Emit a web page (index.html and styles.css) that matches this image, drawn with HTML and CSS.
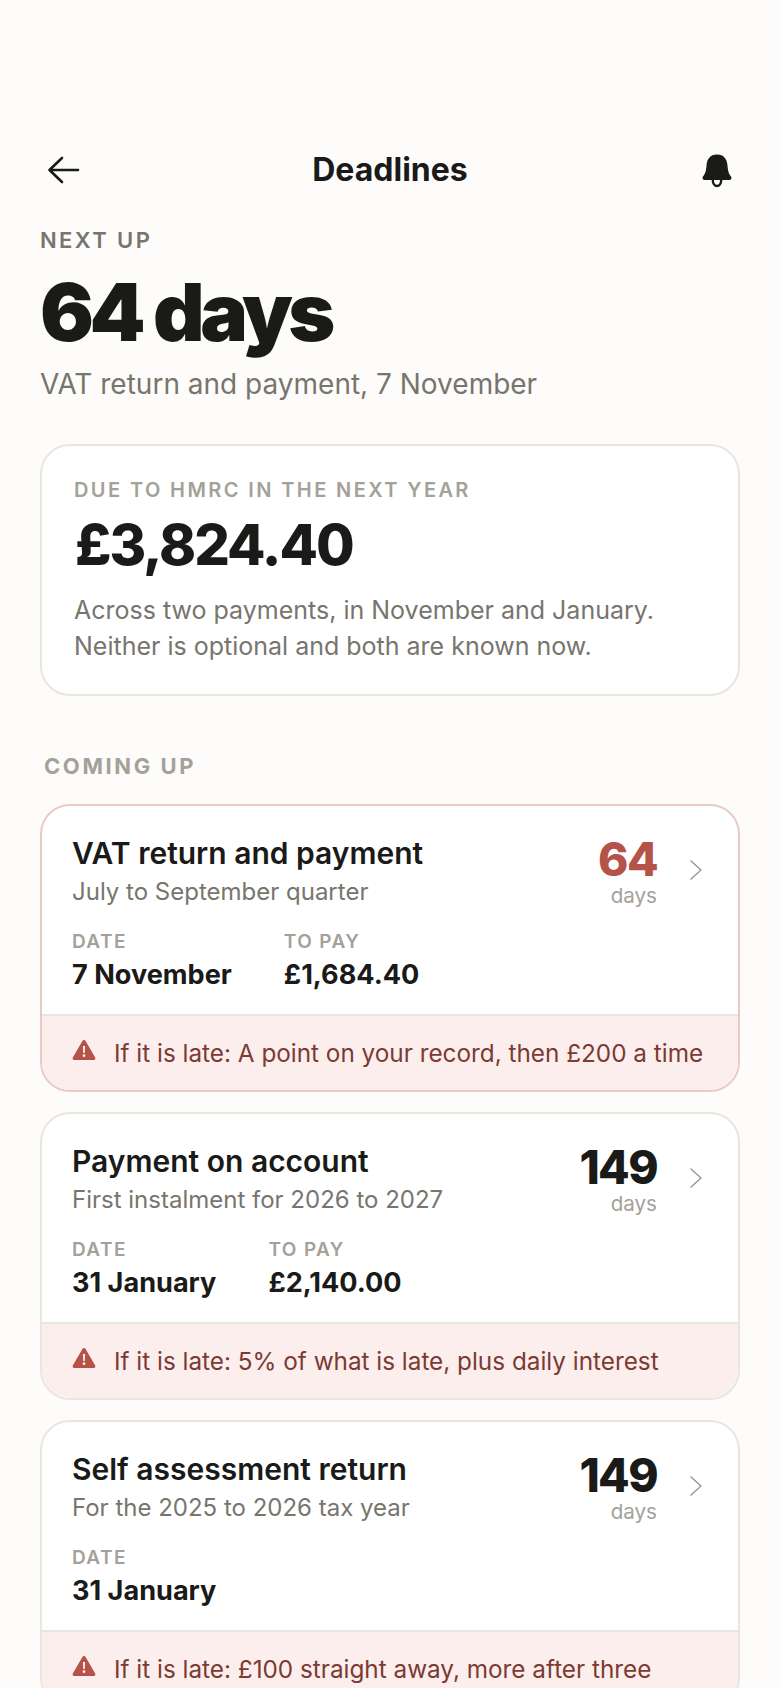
FILE: index.html
```html
<!DOCTYPE html>
<html lang="en">
<head>
<meta charset="utf-8">
<title>Deadlines</title>
<link rel="stylesheet" href="styles.css">
</head>
<body>
<div class="screen">
  <header class="nav">
    <svg class="nav-icon nav-back" viewBox="0 0 40 40" fill="none" stroke="#1a1a18" stroke-width="2.6" stroke-linecap="round" stroke-linejoin="round"><path d="M34 20H6M18 8 5.500 20 18 32"/></svg>
    <h1 class="nav-title">Deadlines</h1>
    <svg class="nav-icon" viewBox="0 0 40 40"><path fill="#1a1a18" d="M20 4.500c-7 0-10 4.700-10.500 11-.4 5.500-1.200 8-3.500 11-.9 1.200-.5 3.500 1.300 3.500h25.400c1.800 0 2.200-2.300 1.300-3.500-2.300-3-3.100-5.500-3.500-11C30 9.200 27 4.500 20 4.500Z"/><path fill="none" stroke="#1a1a18" stroke-width="2.400" d="M15.800 30c0 4 2.200 6 4.200 6s4.200-2 4.200-6"/></svg>
  </header>

  <section class="hero">
    <p class="eyebrow">NEXT UP</p>
    <p class="hero-days">64 days</p>
    <p class="hero-sub">VAT return and payment, 7 November</p>
  </section>

  <section class="total">
    <p class="total-label">DUE TO HMRC IN THE NEXT YEAR</p>
    <p class="total-amount">£3,824.40</p>
    <p class="total-note">Across two payments, in November and January. Neither is optional and both are known now.</p>
  </section>

  <h2 class="section-title">COMING UP</h2>

  <div class="list">
    <article class="card card-urgent">
      <div class="card-body">
        <div class="card-main">
          <h3 class="card-title">VAT return and payment</h3>
          <p class="card-sub">July to September quarter</p>
          <div class="facts">
            <div><p class="fact-label">DATE</p><p class="fact-value">7 November</p></div>
            <div><p class="fact-label">TO PAY</p><p class="fact-value">£1,684.40</p></div>
          </div>
        </div>
        <div class="count"><span class="count-num count-urgent">64</span><span class="count-unit">days</span></div>
        <svg class="chev" viewBox="0 0 14 22" fill="none" stroke="#9c9a94" stroke-width="1.500" stroke-linecap="round" stroke-linejoin="round"><path d="M2 2l10 9-10 9"/></svg>
      </div>
      <div class="warn">
        <svg class="warn-icon" viewBox="0 0 24 22"><path fill="#b5524a" d="M12 1c.7 0 1.200.4 1.600 1l9.600 16.500c.7 1.200-.1 2.500-1.500 2.500H2.300c-1.400 0-2.200-1.300-1.500-2.500L10.400 2c.4-.6.900-1 1.600-1Z"/><path fill="#fbeeec" d="M10.900 7h2.200l-.3 7h-1.600zM12 15.300a1.400 1.400 0 1 1 0 2.800 1.400 1.400 0 0 1 0-2.800Z"/></svg>
        <p class="warn-text">If it is late: A point on your record, then £200 a time</p>
      </div>
    </article>

    <article class="card">
      <div class="card-body">
        <div class="card-main">
          <h3 class="card-title">Payment on account</h3>
          <p class="card-sub">First instalment for 2026 to 2027</p>
          <div class="facts">
            <div><p class="fact-label">DATE</p><p class="fact-value">31 January</p></div>
            <div><p class="fact-label">TO PAY</p><p class="fact-value">£2,140.00</p></div>
          </div>
        </div>
        <div class="count"><span class="count-num">149</span><span class="count-unit">days</span></div>
        <svg class="chev" viewBox="0 0 14 22" fill="none" stroke="#9c9a94" stroke-width="1.500" stroke-linecap="round" stroke-linejoin="round"><path d="M2 2l10 9-10 9"/></svg>
      </div>
      <div class="warn">
        <svg class="warn-icon" viewBox="0 0 24 22"><path fill="#b5524a" d="M12 1c.7 0 1.200.4 1.600 1l9.600 16.500c.7 1.200-.1 2.500-1.500 2.500H2.300c-1.400 0-2.200-1.300-1.500-2.500L10.400 2c.4-.6.900-1 1.600-1Z"/><path fill="#fbeeec" d="M10.900 7h2.200l-.3 7h-1.600zM12 15.300a1.400 1.400 0 1 1 0 2.800 1.400 1.400 0 0 1 0-2.800Z"/></svg>
        <p class="warn-text">If it is late: 5% of what is late, plus daily interest</p>
      </div>
    </article>

    <article class="card">
      <div class="card-body">
        <div class="card-main">
          <h3 class="card-title">Self assessment return</h3>
          <p class="card-sub">For the 2025 to 2026 tax year</p>
          <div class="facts">
            <div><p class="fact-label">DATE</p><p class="fact-value">31 January</p></div>
          </div>
        </div>
        <div class="count"><span class="count-num">149</span><span class="count-unit">days</span></div>
        <svg class="chev" viewBox="0 0 14 22" fill="none" stroke="#9c9a94" stroke-width="1.500" stroke-linecap="round" stroke-linejoin="round"><path d="M2 2l10 9-10 9"/></svg>
      </div>
      <div class="warn">
        <svg class="warn-icon" viewBox="0 0 24 22"><path fill="#b5524a" d="M12 1c.7 0 1.200.4 1.600 1l9.600 16.500c.7 1.200-.1 2.500-1.500 2.500H2.300c-1.400 0-2.200-1.300-1.500-2.500L10.400 2c.4-.6.900-1 1.600-1Z"/><path fill="#fbeeec" d="M10.900 7h2.200l-.3 7h-1.600zM12 15.300a1.400 1.400 0 1 1 0 2.800 1.400 1.400 0 0 1 0-2.800Z"/></svg>
        <p class="warn-text">If it is late: £100 straight away, more after three</p>
      </div>
    </article>
  </div>
</div>
</body>
</html>
```
FILE: styles.css
```css
* { box-sizing: border-box; }
html, body { margin: 0; padding: 0; height: 100%; overflow: hidden; }
body { background: #fdfcfa; font-family: Inter, "Liberation Sans", sans-serif; color: #1a1a18; }
h1, h2, h3, p { margin: 0; font-weight: inherit; }
.screen { padding: 150px 40px 0; width: 780px; height: 1688px; overflow: hidden; }

.nav { display: flex; align-items: center; justify-content: space-between; height: 40px; }
.nav-icon { width: 40px; height: 40px; flex: none; margin: 0 3px; }
.nav-back { margin: 0 2px 0 4px; }
.nav-title { font-size: 32px; line-height: 42px; font-weight: 700; }

.hero { margin-top: 36px; }
.eyebrow { font-size: 22px; line-height: 28px; font-weight: 600; letter-spacing: 2.4px; color: #77756d; }
.hero-days { margin-top: 10px; font-size: 80px; line-height: 96px; font-weight: 900; letter-spacing: -4.4px; }
.hero-sub { margin-top: 6px; font-size: 28px; line-height: 36px; color: #77756d; }

.total { margin-top: 42px; height: 252px; padding: 31px 32px 0; background: #fff; border: 2px solid #e8e6df; border-radius: 30px; }
.total-label { font-size: 20px; line-height: 26px; font-weight: 600; letter-spacing: 2.4px; color: #a3a199; }
.total-amount { margin: 7px 0 0 1px; font-size: 56px; line-height: 70px; font-weight: 800; letter-spacing: -2px; }
.total-note { margin-top: 12px; font-size: 25px; line-height: 36px; color: #77756d; }

.section-title { margin: 56px 0 0 4px; font-size: 22px; line-height: 28px; font-weight: 700; letter-spacing: 2.6px; color: #a3a199; }

.list { margin-top: 24px; display: flex; flex-direction: column; gap: 20px; }
.card { border: 2px solid #e8e6df; border-radius: 30px; background: #fff; overflow: hidden; flex: none; }
.card-urgent { border-color: #e8cbc4; }
.card-body { display: flex; align-items: flex-start; height: 208px; padding: 29px 30px 0 30px; }
.card-main { flex: 1; min-width: 0; }
.card-title { font-size: 30px; line-height: 36px; font-weight: 600; }
.card-sub { margin-top: 5px; font-size: 24px; line-height: 32px; color: #77756d; }
.facts { display: flex; gap: 52px; margin-top: 22px; }
.fact-label { font-size: 19px; line-height: 24px; font-weight: 600; letter-spacing: 1.4px; color: #a3a199; }
.fact-value { margin-top: 3px; font-size: 27.1px; line-height: 36px; font-weight: 700; }

.count { display: flex; flex-direction: column; align-items: flex-end; margin-top: 1px; }
.count-num { font-size: 46px; line-height: 47px; font-weight: 800; letter-spacing: -1.6px; }
.count-urgent { color: #b5524a; }
.count-unit { font-size: 20.6px; line-height: 26px; color: #a3a199; }
.chev { width: 14px; height: 22px; margin: 24px 5px 0 32px; flex: none; }

.warn { display: flex; align-items: center; height: 76px; padding: 0 30px; background: #fbeeec; border-top: 2px solid #e8e6df; }
.warn-icon { width: 24px; height: 22px; flex: none; margin: -6px 18px 0 0; }
.warn-text { font-size: 24.3px; line-height: 36px; color: #7c3a34; white-space: nowrap; }
```
